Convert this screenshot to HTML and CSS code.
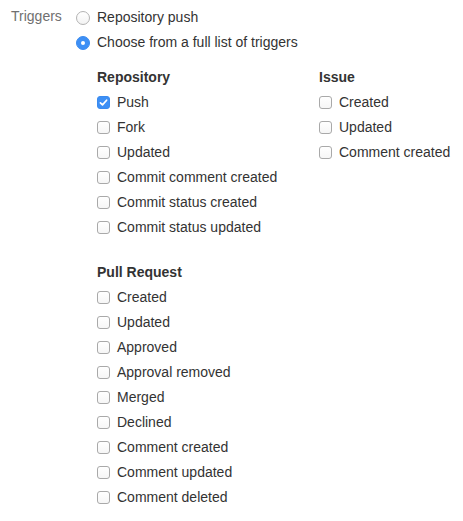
FILE: index.html
```html
<!DOCTYPE html>
<html>
<head>
<meta charset="utf-8">
<link rel="stylesheet" href="styles.css">
</head>
<body>
<div class="form">
  <div class="label">Triggers</div>
  <div class="field">
    <label class="row"><span class="radio"></span>Repository push</label>
    <label class="row"><span class="radio on"></span>Choose from a full list of triggers</label>
    <div class="groups">
      <div class="top">
        <div class="group repo">
          <div class="row head">Repository</div>
          <label class="row"><span class="cb on"><svg viewBox="0 0 13 13" width="13" height="13"><path d="M3.4 6.8 L5.5 8.9 L9.6 4.2" fill="none" stroke="#fff" stroke-width="1.7" stroke-linecap="round" stroke-linejoin="round"/></svg></span>Push</label>
          <label class="row"><span class="cb"></span>Fork</label>
          <label class="row"><span class="cb"></span>Updated</label>
          <label class="row"><span class="cb"></span>Commit comment created</label>
          <label class="row"><span class="cb"></span>Commit status created</label>
          <label class="row"><span class="cb"></span>Commit status updated</label>
        </div>
        <div class="group">
          <div class="row head">Issue</div>
          <label class="row"><span class="cb"></span>Created</label>
          <label class="row"><span class="cb"></span>Updated</label>
          <label class="row"><span class="cb"></span>Comment created</label>
        </div>
      </div>
      <div class="group pr">
        <div class="row head">Pull Request</div>
        <label class="row"><span class="cb"></span>Created</label>
        <label class="row"><span class="cb"></span>Updated</label>
        <label class="row"><span class="cb"></span>Approved</label>
        <label class="row"><span class="cb"></span>Approval removed</label>
        <label class="row"><span class="cb"></span>Merged</label>
        <label class="row"><span class="cb"></span>Declined</label>
        <label class="row"><span class="cb"></span>Comment created</label>
        <label class="row"><span class="cb"></span>Comment updated</label>
        <label class="row"><span class="cb"></span>Comment deleted</label>
      </div>
    </div>
  </div>
</div>
</body>
</html>
```
FILE: styles.css
```css
html, body {
  margin: 0;
  padding: 0;
  background: #fff;
}
body {
  font-family: "Liberation Sans", Arial, sans-serif;
  font-size: 14px;
  color: #333;
}
.form {
  display: flex;
  padding-top: 4px;
}
.label {
  width: 65px;
  padding-left: 11px;
  line-height: 25px;
  color: #707070;
}
.field {
  display: flex;
  flex-direction: column;
}
.row {
  display: flex;
  align-items: center;
  height: 25px;
  white-space: nowrap;
}
.groups {
  padding-left: 21px;
  padding-top: 10px;
}
.top {
  display: flex;
}
.repo {
  width: 222px;
}
.pr {
  margin-top: 20px;
}
.head {
  font-weight: bold;
}
.radio {
  box-sizing: border-box;
  width: 14px;
  height: 14px;
  margin-top: 2px;
  border-radius: 50%;
  border: 1px solid #b3b3b3;
  background: linear-gradient(#fff, #f3f3f3);
  margin-right: 7px;
  display: flex;
  align-items: center;
  justify-content: center;
}
.radio.on {
  border-color: #3a8bef;
  background: #3d8ff5;
}
.radio.on::after {
  content: "";
  width: 4px;
  height: 4px;
  border-radius: 50%;
  background: #fff;
}
.cb {
  box-sizing: border-box;
  width: 13px;
  height: 13px;
  margin-top: 2px;
  border-radius: 3px;
  border: 1px solid #a9a9a9;
  background: linear-gradient(#fff, #f6f6f6);
  margin-right: 7px;
  display: flex;
  align-items: center;
  justify-content: center;
  position: relative;
}
.cb.on {
  border-color: #3a8bef;
  background: #3d8ff5;
}
.cb svg {
  position: absolute;
  left: -1px;
  top: -1px;
}
```
